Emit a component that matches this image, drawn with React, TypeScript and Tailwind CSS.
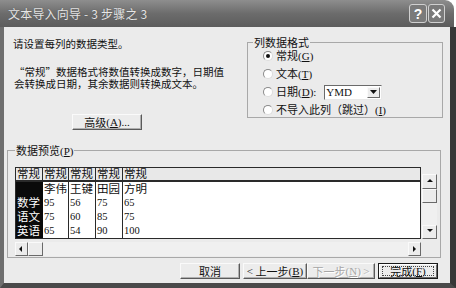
import React from 'react';

const cjk = "font-['Noto_Sans_CJK_SC',sans-serif]";
const serif = "font-['Liberation_Serif',serif]";

function Btn({ children, w, disabled, primary }: { children: React.ReactNode; w: string; disabled?: boolean; primary?: boolean }) {
  if (primary) {
    return (
      <div className={`${w} h-[16px] border border-[#1a1a1a] bg-[#ececec] flex`}>
        <div className="flex-1 flex border border-t-white border-l-white border-r-[#6a6a6a] border-b-[#6a6a6a]">
          <div className="flex-1 mx-[2px] my-[1px] border border-dotted border-[#444] flex items-center justify-center text-[11px] leading-none whitespace-nowrap">
            {children}
          </div>
        </div>
      </div>
    );
  }
  return (
    <div
      className={`${w} h-[16px] bg-[#ececec] border border-t-[#fafafa] border-l-[#fafafa] border-r-[#5a5a5a] border-b-[#5a5a5a] shadow-[inset_-1px_-1px_0_#b0b0b0] flex items-center justify-center text-[11px] leading-none whitespace-nowrap ${
        disabled ? 'text-[#a6a6a6] [text-shadow:1px_1px_0_#fff]' : 'text-[#111]'
      }`}
    >
      {children}
    </div>
  );
}

function Radio({ checked }: { checked?: boolean }) {
  return (
    <span className="w-[10px] h-[10px] rounded-full border border-t-[#8a8a8a] border-l-[#8a8a8a] border-b-[#dcdcdc] border-r-[#dcdcdc] bg-white flex items-center justify-center shrink-0">
      {checked && <span className="w-[4px] h-[4px] rounded-full bg-[#111]" />}
    </span>
  );
}

function Key({ k }: { k: string }) {
  return (
    <span className={`${serif} text-[11px] leading-none`}>
      (<u>{k}</u>)
    </span>
  );
}

function ArrowBtn({ dir, cls }: { dir: 'up' | 'down' | 'left' | 'right'; cls: string }) {
  const pts = {
    up: '2,5 5,2 8,5',
    down: '2,2 5,5 8,2',
    left: '5,2 2,5 5,8',
    right: '3,2 6,5 3,8',
  }[dir];
  return (
    <div className={`${cls} bg-[#ececec] border border-t-[#fafafa] border-l-[#fafafa] border-r-[#6a6a6a] border-b-[#6a6a6a] flex items-center justify-center`}>
      <svg width="10" height="10" viewBox="0 0 10 10">
        <polygon points={pts} fill="#111" />
      </svg>
    </div>
  );
}

const widths = ['w-[27px]', 'w-[26px]', 'w-[27px]', 'w-[27px]', 'flex-1'];

const rows = [
  ['', '李伟', '王键', '田园', '方明'],
  ['数学', '95', '56', '75', '65'],
  ['语文', '75', '60', '85', '75'],
  ['英语', '65', '54', '90', '100'],
];

export default function App() {
  return (
    <div className={`w-[456px] h-[288px] bg-white flex flex-col text-[#111] ${cjk}`}>
      {/* Title bar */}
      <div className="h-[27px] shrink-0 rounded-tr-[9px] bg-linear-to-b from-[#8e8e8e] via-[#6c6c6c] to-[#5c5c5c] flex items-center pl-[8px] pr-[9px] mr-[2px]">
        <span className="text-[12px] text-[#e6e6e6] tracking-[0.2px] [text-shadow:0_0_1px_#444]">文本导入向导 - 3 步骤之 3</span>
        <div className="ml-auto flex gap-[1px]">
          <div className="w-[18px] h-[19px] rounded-[3px] border border-[#d0d0d0] bg-[#7a7a7a] flex items-center justify-center text-white text-[14px] font-bold font-['Liberation_Sans',sans-serif] leading-none">
            ?
          </div>
          <div className="w-[17px] h-[19px] rounded-[3px] border border-[#d0d0d0] bg-[#7a7a7a] flex items-center justify-center">
            <svg width="11" height="11" viewBox="0 0 11 11">
              <path d="M1.5 1.5 L9.5 9.5 M9.5 1.5 L1.5 9.5" stroke="#fff" strokeWidth="2.2" />
            </svg>
          </div>
        </div>
      </div>

      {/* Body */}
      <div className="flex-1 flex flex-col bg-[#ebebeb] border-l-[4px] border-l-[#6e6e6e] border-r-[6px] border-r-[#383838] border-b-[5px] border-b-[#4a4a4a] pt-[10px]">
        {/* Top section */}
        <div className="flex pl-[9px]">
          <div className="w-[225px] flex flex-col">
            <p className="text-[10.5px] leading-[13px]">请设置每列的数据类型。</p>
            <p className="mt-[16px] text-[10.5px] leading-[12px] pl-[1px]">
              “常规”数据格式将数值转换成数字，日期值
              <br />
              会转换成日期，其余数据则转换成文本。
            </p>
            <div className="mt-[24px] ml-[59px]">
              <Btn w="w-[70px]">
                高级<Key k="A" />
                <span className={serif}>...</span>
              </Btn>
            </div>
          </div>

          <fieldset className="ml-[9px] w-[196px] h-[81px] border border-[#a8a8a8] pl-[15px]">
            <legend className="-ml-[10px] px-[1px] text-[11px] leading-[11px]">列数据格式</legend>
            <div className="-mt-[1px] flex flex-col">
              <div className="h-[18px] flex items-center gap-[3px]">
                <Radio checked />
                <span className="text-[11px] leading-none whitespace-nowrap">
                  常规<Key k="G" />
                </span>
              </div>
              <div className="h-[18px] flex items-center gap-[3px]">
                <Radio />
                <span className="text-[11px] leading-none whitespace-nowrap">
                  文本<Key k="T" />
                </span>
              </div>
              <div className="h-[18px] flex items-center gap-[3px]">
                <Radio />
                <span className="text-[11px] leading-none whitespace-nowrap">
                  日期<Key k="D" />
                  <span className={serif}>:</span>
                </span>
                <div className="ml-[5px] w-[58px] h-[15px] bg-white border border-t-[#6a6a6a] border-l-[#6a6a6a] border-b-[#e8e8e8] border-r-[#e8e8e8] flex items-center">
                  <span className={`${serif} text-[11px] leading-none pl-[1px]`}>YMD</span>
                  <div className="ml-auto mr-[1px] w-[13px] h-[11px] bg-[#ececec] border border-t-[#fafafa] border-l-[#fafafa] border-r-[#6a6a6a] border-b-[#6a6a6a] flex items-center justify-center">
                    <svg width="7" height="4" viewBox="0 0 7 4">
                      <polygon points="0,0 7,0 3.5,4" fill="#111" />
                    </svg>
                  </div>
                </div>
              </div>
              <div className="h-[18px] flex items-center gap-[3px]">
                <Radio />
                <span className="text-[11px] leading-none whitespace-nowrap">
                  不导入此列（跳过）<Key k="I" />
                </span>
              </div>
            </div>
          </fieldset>
        </div>

        {/* Data preview */}
        <fieldset className="mt-[14px] ml-[3px] w-[434px] border border-[#a8a8a8] pl-[7px]">
          <legend className="px-[1px] text-[11px] leading-[13px] whitespace-nowrap">
            数据预览<Key k="P" />
          </legend>
          <div className="mt-[10px] flex">
            <div className="w-[406px] h-[72px] border border-[#2a2a2a] bg-white flex flex-col">
              <div className="h-[14px] flex bg-[#e8e8e8] border-b-[2px] border-[#2a2a2a]">
                {widths.map((w, i) => (
                  <div
                    key={i}
                    className={`${w} flex items-center pl-[1px] text-[11.5px] leading-none whitespace-nowrap ${i < 4 ? 'border-r border-[#2a2a2a]' : ''}`}
                  >
                    常规
                  </div>
                ))}
              </div>
              {rows.map((r, ri) => (
                <div key={ri} className="h-[14px] flex">
                  {r.map((c, ci) => {
                    const isNum = /^\d+$/.test(c);
                    return (
                      <div
                        key={ci}
                        className={`${widths[ci]} flex items-center leading-none whitespace-nowrap ${
                          ci === 0 ? 'bg-[#0a0a0a] text-white' : ''
                        } ${ci > 0 && ci < 4 ? 'border-r border-[#2a2a2a]' : ''} ${
                          isNum ? `${serif} text-[10.5px] pl-[1px]` : 'text-[11.5px] pl-[1px]'
                        }`}
                      >
                        {c}
                      </div>
                    );
                  })}
                </div>
              ))}
            </div>
            <div className="ml-[1px] mt-[7px] w-[15px] h-[65px] flex flex-col bg-[#f0f0f0]">
              <ArrowBtn dir="up" cls="h-[15px]" />
              <div className="h-[14px] bg-[#ececec] border border-t-[#fafafa] border-l-[#fafafa] border-r-[#6a6a6a] border-b-[#6a6a6a]" />
              <div className="flex-1" />
              <ArrowBtn dir="down" cls="h-[14px]" />
            </div>
          </div>
          <div className="mt-[3px] w-[406px] h-[14px] flex bg-[#f0f0f0]">
            <ArrowBtn dir="left" cls="w-[13px]" />
            <div className="w-[15px] bg-[#ececec] border border-t-[#fafafa] border-l-[#fafafa] border-r-[#6a6a6a] border-b-[#6a6a6a]" />
            <div className="flex-1" />
            <ArrowBtn dir="right" cls="w-[13px]" />
          </div>
          <div className="h-[1px]" />
        </fieldset>

        {/* Buttons */}
        <div className="mt-[5px] flex justify-end pr-[12px]">
          <Btn w="w-[60px]">取消</Btn>
          <div className="ml-[3px]">
            <Btn w="w-[64px]">
              <span className={serif}>&lt;</span>&nbsp;上一步<Key k="B" />
            </Btn>
          </div>
          <Btn w="w-[68px]" disabled>
            下一步<span className={`${serif} text-[11px]`}>(<u>N</u>)</span>&nbsp;<span className={serif}>&gt;</span>
          </Btn>
          <div className="ml-[3px]">
            <Btn w="w-[60px]" primary>
              完成<Key k="F" />
            </Btn>
          </div>
        </div>
      </div>
    </div>
  );
}
